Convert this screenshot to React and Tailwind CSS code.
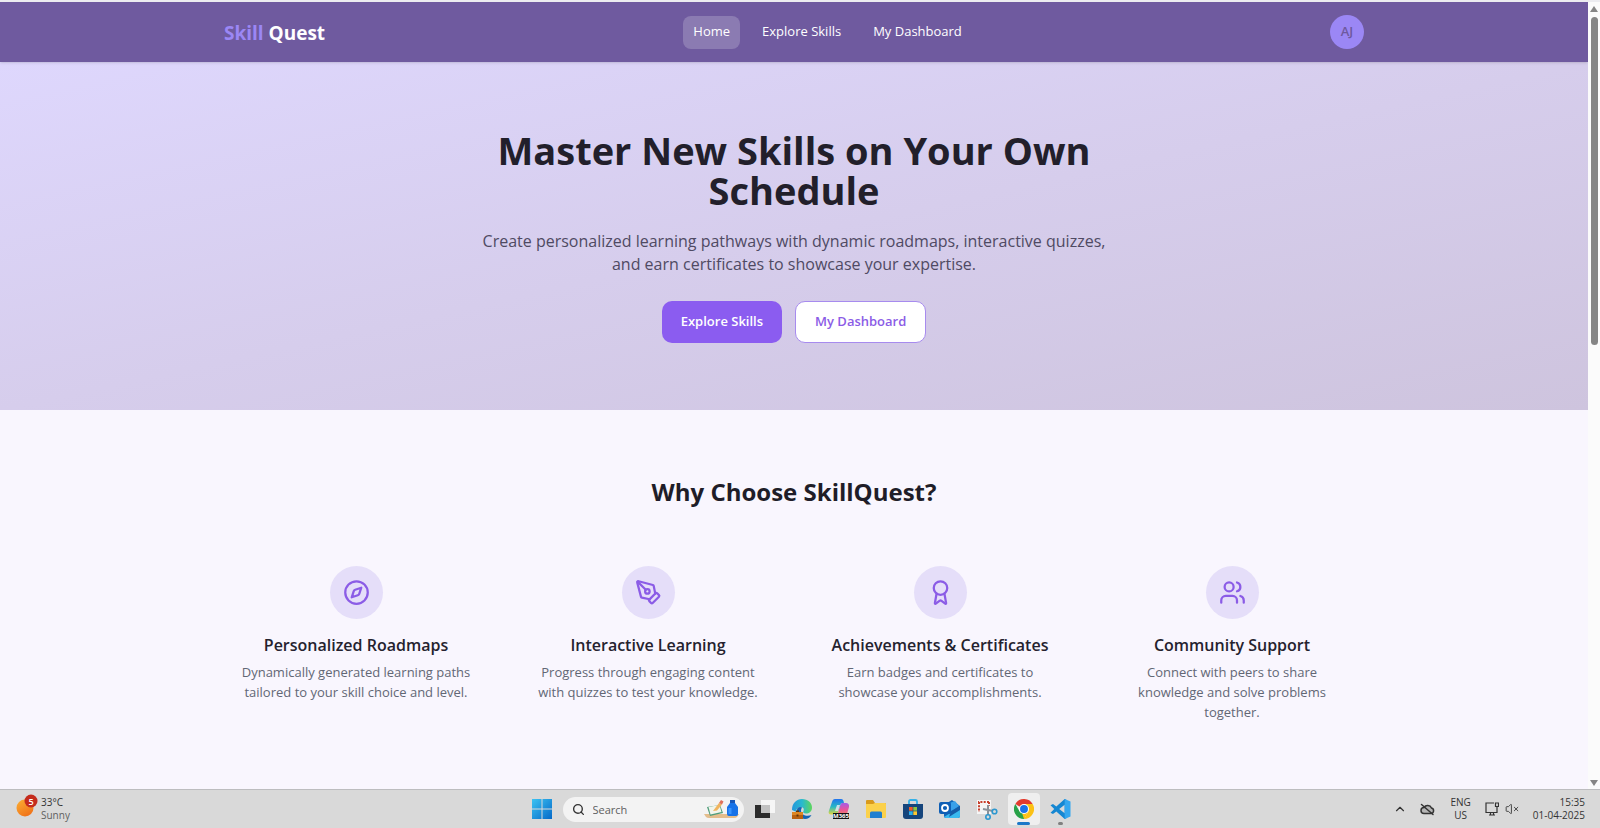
import { Compass, PenTool, Award, Users, Search, ChevronUp, VolumeX } from "lucide-react";

const features = [
  { icon: Compass, title: "Personalized Roadmaps", text: "Dynamically generated learning paths tailored to your skill choice and level." },
  { icon: PenTool, title: "Interactive Learning", text: "Progress through engaging content with quizzes to test your knowledge." },
  { icon: Award, title: "Achievements & Certificates", text: "Earn badges and certificates to showcase your accomplishments." },
  { icon: Users, title: "Community Support", text: "Connect with peers to share knowledge and solve problems together." },
];

function Header() {
  return (
    <header className="relative z-10 bg-[#6f5a9f] shadow-sm">
      <div className="mx-auto flex h-[60px] max-w-[1140px] items-center justify-between">
        <a href="#home" className="pt-[2px] text-[19px] font-bold text-white">
          <span className="text-[#9b87f5]">Skill</span> Quest
        </a>
        <nav className="flex items-center gap-3 text-[13px] text-white">
          <a href="#home" className="flex h-[33px] items-center rounded-lg bg-white/20 px-[10px]">Home</a>
          <a href="#explore" className="flex h-[33px] items-center px-[10px]">Explore Skills</a>
          <a href="#dashboard" className="flex h-[33px] items-center px-[10px]">My Dashboard</a>
        </nav>
        <button type="button" className="size-[34px] rounded-full bg-[#9b87f5] text-[13px] font-semibold text-[#6e599f]">AJ</button>
      </div>
    </header>
  );
}

function Hero() {
  return (
    <section className="bg-linear-to-br from-[#ded7fd] via-[#d6cdec] to-[#cec4de] pt-[68px] pb-[67px] text-center">
      <h1 className="mx-auto max-w-[620px] text-[38px] leading-10 font-bold text-[#221f2b]">Master New Skills on Your Own Schedule</h1>
      <p className="mx-auto mt-5 max-w-[640px] text-[16px] leading-[23px] text-[#4f4a63]">
        Create personalized learning pathways with dynamic roadmaps, interactive quizzes, and earn certificates to showcase your expertise.
      </p>
      <div className="mt-[25px] flex justify-center gap-[13px] text-[13px] font-semibold">
        <button type="button" className="h-[42px] rounded-[10px] bg-[#8b5cf0] px-[19px] text-white">Explore Skills</button>
        <button type="button" className="h-[42px] rounded-[10px] border border-[#a78bee] bg-white px-[19px] text-[#8b5ce6]">My Dashboard</button>
      </div>
    </section>
  );
}

function Features() {
  return (
    <section className="pt-[66px]">
      <h2 className="text-center text-2xl leading-8 font-bold text-[#1f1d28]">Why Choose SkillQuest?</h2>
      <div className="mx-auto mt-[58px] grid max-w-[1140px] grid-cols-4 gap-7">
        {features.map(({ icon: Icon, title, text }) => (
          <article key={title} className="flex flex-col items-center text-center">
            <div className="flex size-[53px] items-center justify-center rounded-full bg-[#e5def9]">
              <Icon size={27} className="text-[#8b5ce6]" />
            </div>
            <h3 className="mt-[15px] text-[16px] leading-[23px] font-semibold text-[#25222e]">{title}</h3>
            <p className="mt-[5px] px-4 text-[13px] leading-5 text-[#626775]">{text}</p>
          </article>
        ))}
      </div>
    </section>
  );
}

function Scrollbar() {
  return (
    <div className="flex w-3 shrink-0 flex-col items-center justify-between bg-[#fbfbfb] pt-1 pb-[3px]">
      <div className="flex h-1/2 flex-col items-center gap-[5px]">
        <svg width="8" height="6" viewBox="0 0 8 6"><path d="M4 0 8 6H0Z" fill="#858585" /></svg>
        <div className="h-[84%] w-[7px] rounded-full bg-[#858585]" />
      </div>
      <svg width="8" height="6" viewBox="0 0 8 6"><path d="M0 0H8L4 6Z" fill="#858585" /></svg>
    </div>
  );
}

const WindowsLogo = () => (
  <svg width="20" height="20" viewBox="0 0 20 20">
    <defs><linearGradient id="win" x1="0" y1="0" x2="1" y2="1"><stop stopColor="#3cc3f2" /><stop offset="1" stopColor="#0569c8" /></linearGradient></defs>
    <path d="M0 0h9.5v9.5H0zM10.5 0H20v9.5h-9.5zM0 10.5h9.5V20H0zM10.5 10.5H20V20h-9.5z" fill="url(#win)" />
  </svg>
);

const SearchArt = () => (
  <svg width="36" height="20" viewBox="0 0 36 20">
    <path d="M0 15h35l-2 3q-1 1-3 1H5q-2 0-3-1z" fill="#e3bd8c" />
    <path d="M3 8l13-2 3 8-13 3z" fill="#4f9d7a" />
    <path d="M4.500 8l11-2 2 7-11 2.500z" fill="#f1f5ec" />
    <path d="M9 12l6-8 3 1.500-5 6z" fill="#f0b45e" /><path d="M15 4l2-3 2.500 1.500L18 5.500z" fill="#e0705a" />
    <path d="M26 1h5v3l3 4v7q0 2-2 2h-7q-2 0-2-2V8l3-4z" fill="#1672e8" />
    <path d="M26 1h5v3h-5z" fill="#1656b8" /><path d="M24.500 9h3v6h-3z" fill="#3895ff" />
  </svg>
);

const TaskView = () => (
  <svg width="20" height="20" viewBox="0 0 20 20">
    <path d="M6 1h14v13H6z" fill="#f6f6f6" /><path d="M0 6h15v13H0z" fill="#2b2b2b" /><path d="M6 6h9v8H6z" fill="#c2c2c2" />
  </svg>
);

const Edge = () => (
  <svg width="22" height="22" viewBox="0 0 22 22">
    <defs>
      <linearGradient id="edgeTop" x1="0" x2="1"><stop stopColor="#2297dc" /><stop offset=".5" stopColor="#29b9cf" /><stop offset="1" stopColor="#5ed65b" /></linearGradient>
    </defs>
    <path d="M1 12C1 5 5.500 1 11 1c6 0 10 4 10 8.500 0 4-3 6-6 6-2.500 0-3.500-1-2.500-2.500 1-2-.5-4-2.500-4-4 0-5 3-4.500 5z" fill="url(#edgeTop)" />
    <path d="M6 12c0 6 4 9 8 9 3 0 5-1.500 6.500-4-5 2-10 0-10.500-4 0-2 .5-3 1.500-3.500C8.500 8 6 9.500 6 12z" fill="#1464b4" />
    <path d="M1 14h11v7H1z" fill="#b8600f" /><path d="M1 14h11v3H1z" fill="#dd8622" /><path d="M5 12.500h3V14H5zM5.500 16.500h2v2h-2z" fill="#623406" />
  </svg>
);

const Copilot = () => (
  <svg width="22" height="22" viewBox="0 0 22 22">
    <defs>
      <linearGradient id="cpA" x1="0" y1="0" x2="0" y2="1"><stop stopColor="#2173ee" /><stop offset=".5" stopColor="#27b8c4" /><stop offset="1" stopColor="#e4d83c" /></linearGradient>
      <linearGradient id="cpB" x1="0" y1="0" x2="0" y2="1"><stop stopColor="#a45ce8" /><stop offset=".5" stopColor="#e8559c" /><stop offset="1" stopColor="#f58b58" /></linearGradient>
    </defs>
    <path d="M14 5h4c2 0 3.500 1.500 3 4l-2 7c-.5 2-2 2-4 2H9c-2 0-2-1-2-2l3-1 2-7c.5-2 1-3 2-3z" fill="url(#cpB)" />
    <path d="M7 1h6c2 0 2.500 1.500 3 4h-2c-1 0-1.500 1-2 3l-2 6c-.5 2-1.500 2.500-3 2.500H3c-2 0-3-1.500-2-4L4 4c.5-2 1.500-3 3-3z" fill="url(#cpA)" />
    <path d="M9 7h3l-2 6H7z" fill="#f1e9f4" opacity=".8" />
    <rect x="5" y="15" width="16" height="6" fill="#111" />
    <text x="13" y="20" textAnchor="middle" fontSize="6" fontWeight="700" fill="#fff">M365</text>
  </svg>
);

const Folder = () => (
  <svg width="22" height="20" viewBox="0 0 22 20">
    <path d="M1 2q0-1 1-1h6l2 3h10q1 0 1 1v6H1z" fill="#d99a1c" /><path d="M1 5h7l2-1h10q1 0 1 1v13q0 1-1 1H2q-1 0-1-1z" fill="#fbd14c" />
    <path d="M5 19v-5q0-1.500 1.500-1.500h9Q17 12.500 17 14v5z" fill="#1f7fd0" />
  </svg>
);

const Store = () => (
  <svg width="20" height="20" viewBox="0 0 20 20">
    <path d="M6 6V2.500Q6 1 7.500 1h5Q14 1 14 2.500V6" fill="none" stroke="#35b1e8" strokeWidth="1.800" />
    <path d="M0 5h20v12q0 3-3 3H3q-3 0-3-3z" fill="#15457c" />
    <path d="M6 8h3.700v3.700H6z" fill="#f05a28" /><path d="M10.300 8H14v3.700h-3.700z" fill="#8cc63f" /><path d="M6 12.300h3.700V16H6z" fill="#29b0ec" /><path d="M10.300 12.300H14V16h-3.700z" fill="#fdc82f" />
  </svg>
);

const Outlook = () => (
  <svg width="22" height="20" viewBox="0 0 22 20">
    <path d="M5 6l8-5 8 6v10q0 2-2 2H7q-2 0-2-2z" fill="#1266b8" /><path d="M8 5l8-3 4 5-8 6z" fill="#3aa0ea" />
    <path d="M5 18L21 8v9q0 2-2 2H7q-1 0-2-1z" fill="#39b9f0" /><path d="M12 12l9-5v4L10 18z" fill="#155ca8" />
    <rect x="0" y="3" width="12" height="12" rx="2" fill="#0f5fb5" /><circle cx="6" cy="9" r="3" fill="none" stroke="#fff" strokeWidth="1.800" />
  </svg>
);

const Snip = () => (
  <svg width="22" height="21" viewBox="0 0 22 21">
    <path d="M1 1h14v14H1z" fill="#f5f5f5" />
    <path d="M13 3H3v10M13 3v4" fill="none" stroke="#c8402c" strokeWidth="2" strokeDasharray="2 1.300" />
    <path d="M7 10l10 2M12 6v10" stroke="#8b9299" strokeWidth="2" />
    <circle cx="18.500" cy="12.500" r="2.300" fill="none" stroke="#2c98d0" strokeWidth="1.600" /><circle cx="12" cy="18" r="2.200" fill="none" stroke="#2c98d0" strokeWidth="1.600" />
  </svg>
);

const Chrome = () => (
  <svg width="20" height="20" viewBox="0 0 48 48">
    <path d="M24 24 3.200 12A24 24 0 0 1 44.800 12H24z" fill="#e33b2e" />
    <path d="M24 12h20.800A24 24 0 0 1 24 48l10.400-18z" fill="#fbc116" />
    <path d="M3.200 12 13.600 30 24 36h4L24 48A24 24 0 0 1 3.200 12z" fill="#28a148" />
    <path d="M34.400 30 24 48l-4-12z" fill="#fbc116" />
    <circle cx="24" cy="24" r="12" fill="#fff" /><circle cx="24" cy="24" r="9.500" fill="#1a73e8" />
  </svg>
);

const VsCode = () => (
  <svg width="21" height="20" viewBox="0 0 24 24">
    <path d="M17 0 7 9 3 6 0 7.500 4.500 12 0 16.500 3 18l4-3 10 9 2-1V1zM17 7v10l-6.500-5z" fill="#1587d2" fillRule="evenodd" />
    <path d="M17 0l7 3v18l-7 3z" fill="#35a7ef" />
  </svg>
);

const Weather = () => (
  <svg width="22" height="30" viewBox="0 0 22 30">
    <defs><linearGradient id="sun" x1="0" y1="0" x2=".6" y2="1"><stop stopColor="#fbb034" /><stop offset="1" stopColor="#f0731a" /></linearGradient></defs>
    <circle cx="9" cy="14" r="8.500" fill="url(#sun)" /><circle cx="15" cy="7" r="6.500" fill="#c42b1c" />
    <text x="15" y="10.500" textAnchor="middle" fontSize="9" fontWeight="600" fill="#fff">5</text>
  </svg>
);

const CloudSlash = () => (
  <svg width="15" height="13" viewBox="0 0 15 13" fill="none" stroke="#333" strokeWidth="1.500" strokeLinecap="round">
    <path d="M4 10.500h7a2.800 2.800 0 0 0 .5-5.500A4.200 4.200 0 0 0 4 4.500a3 3 0 0 0 0 6z" fill="#b5b5b5" />
    <path d="M1.500 1.500l11.500 10" />
  </svg>
);

const Network = () => (
  <svg width="14" height="14" viewBox="0 0 14 14" fill="none" stroke="#333" strokeWidth="1.200">
    <path d="M9 1H1v9.500h11V7M4 13h6M5.500 10.500V13M8.500 10.500V13M10.500 1h3v3.500h-3zM12 4.500V7" />
  </svg>
);

const apps = [
  { name: "Task View", icon: TaskView },
  { name: "Edge", icon: Edge },
  { name: "Copilot", icon: Copilot },
  { name: "File Explorer", icon: Folder },
  { name: "Store", icon: Store },
  { name: "Outlook", icon: Outlook },
  { name: "Snipping Tool", icon: Snip },
  { name: "Chrome", icon: Chrome, active: true },
  { name: "Visual Studio Code", icon: VsCode, open: true },
];

function Taskbar() {
  return (
    <footer className="grid h-[39px] shrink-0 grid-cols-[1fr_auto_1fr] items-center border-t border-[#bdbdbf] bg-[#d9d9d9] text-[10px] leading-[13px] text-[#333]">
      <div className="flex items-center gap-[3px] pl-4">
        <Weather />
        <div><div>33°C</div><div className="text-[#606060]">Sunny</div></div>
      </div>
      <div className="flex items-center gap-[5px] pl-[2px]">
        <button type="button" aria-label="Start" className="flex size-8 items-center justify-center"><WindowsLogo /></button>
        <label className="flex h-[25px] w-[181px] items-center gap-2 rounded-full bg-[#f3f3f3] pr-1 pl-[9px]">
          <Search size={13} strokeWidth={2.5} className="shrink-0" />
          <input type="search" aria-label="Search" placeholder="Search" className="w-0 min-w-0 flex-1 text-[11px] outline-none placeholder:text-[#606060]" />
          <SearchArt />
        </label>
        {apps.map(({ name, icon: Icon, active, open }) => (
          <button key={name} type="button" aria-label={name} className={active ? "relative flex size-8 items-center justify-center rounded-sm bg-[#efefef]" : "relative flex size-8 items-center justify-center"}>
            <Icon />
            {active && <span className="absolute bottom-0 h-[3px] w-[13px] rounded-full bg-[#1a78c8]" />}
            {open && <span className="absolute bottom-0 h-[3px] w-[5px] rounded-full bg-[#808080]" />}
          </button>
        ))}
      </div>
      <div className="flex items-center justify-end pr-[15px]">
        <ChevronUp size={14} className="mr-[13px]" />
        <CloudSlash />
        <div className="mr-[14px] ml-[15px] text-center"><div>ENG</div><div>US</div></div>
        <Network />
        <VolumeX size={14} strokeWidth={1.5} className="mr-[14px] ml-[6px]" />
        <div className="text-right"><div>15:35</div><div>01-04-2025</div></div>
      </div>
    </footer>
  );
}

export default function App() {
  return (
    <div className="flex h-screen flex-col border-t-2 border-[#ececf0] bg-[#f9f6fe] font-['Open_Sans','Noto_Sans',sans-serif]">
      <div className="flex min-h-0 flex-1">
        <main className="min-w-0 flex-1 overflow-hidden">
          <Header />
          <Hero />
          <Features />
        </main>
        <Scrollbar />
      </div>
      <Taskbar />
    </div>
  );
}
